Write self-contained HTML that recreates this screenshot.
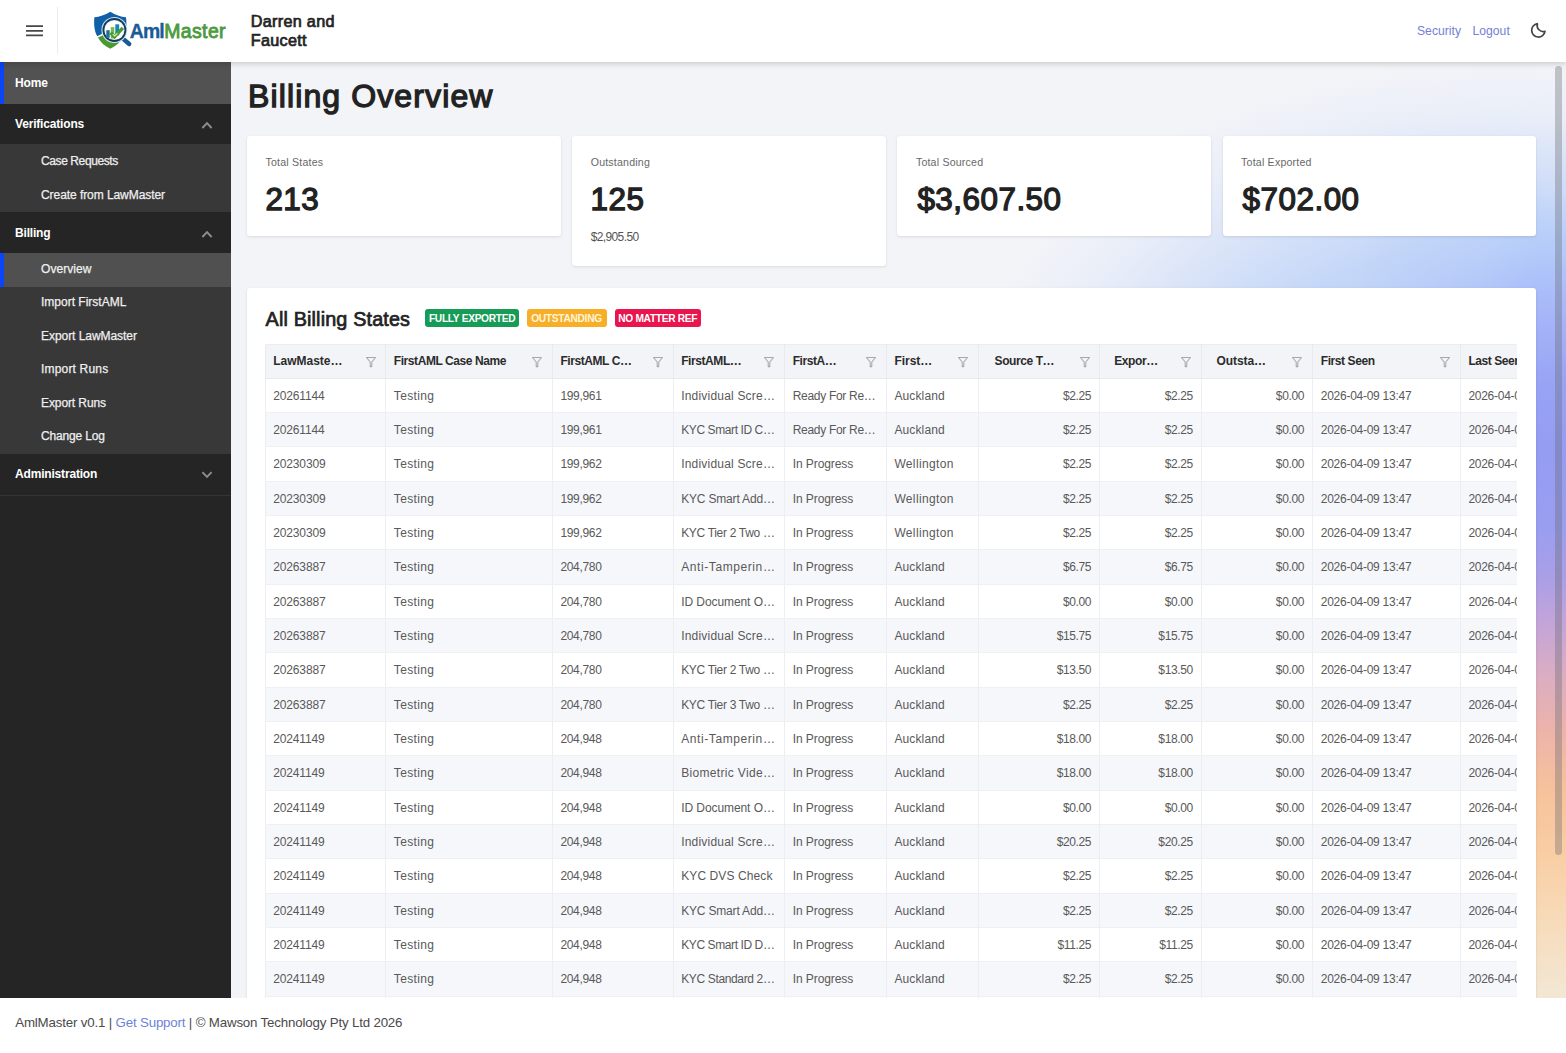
<!DOCTYPE html>
<html lang="en">
<head>
<meta charset="utf-8">
<title>Billing Overview - AmlMaster</title>
<style>
*{box-sizing:border-box;margin:0;padding:0}
html,body{width:1566px;height:1053px;overflow:hidden;background:#fff}
body{font-family:"Liberation Sans",sans-serif;font-size:12px;color:#444;position:relative}
a{text-decoration:none}
.abs{position:absolute}

/* ---------- top bar ---------- */
#topbar{position:absolute;left:0;top:0;width:1566px;height:62px;background:#fff;z-index:5;box-shadow:0 2px 6px rgba(0,0,0,.17)}
#burger{position:absolute;left:26px;top:24.9px;width:17px;height:12px}
#burger i{position:absolute;left:0;width:17px;height:2px;background:#3a3a3a;border-radius:.5px}
#vdiv{position:absolute;left:57.3px;top:7px;width:1px;height:47px;background:#ececec}
#logo{position:absolute;left:88px;top:6px;width:60px;height:50px}
#brand{position:absolute;left:129.8px;top:19.2px;font-size:19.4px;line-height:24px;font-weight:bold;letter-spacing:-.75px;white-space:nowrap}
#brand .a{color:#1b5b98;-webkit-text-stroke:.35px #1b5b98;letter-spacing:-.85px}
#brand .m{color:#4f9a41;font-weight:normal;-webkit-text-stroke:.85px #4f9a41;letter-spacing:.42px;margin-left:.3px}
#firm{position:absolute;left:250.8px;top:12.2px;font-size:16.2px;line-height:18.6px;font-weight:normal;-webkit-text-stroke:.72px #242424;color:#242424;letter-spacing:.3px;white-space:nowrap}
.toplink{position:absolute;top:23.6px;font-size:12.1px;line-height:15px;color:#7080d6;white-space:nowrap;letter-spacing:.05px}
#moon{position:absolute;left:1530px;top:22px;width:17px;height:17px}

/* ---------- sidebar ---------- */
#side{position:absolute;left:0;top:62px;width:231.4px;height:936px;background:#252525;color:#fff;overflow:hidden}
#side .row{position:absolute;left:0;width:232px;white-space:nowrap;padding-top:.6px}
#side .hd{font-weight:bold;font-size:12px;letter-spacing:-.18px;padding-left:15px;color:#fff}
#side .sub{background:#383838;font-size:12px;letter-spacing:-.2px;padding-left:41px;color:#efefef;-webkit-text-stroke:.25px #efefef}
#side .act{background:#505050}
#side .bar{position:absolute;left:0;top:0;width:4px;height:100%;background:#0b45f5}
#side svg.chev{position:absolute;left:201px;width:12px;height:9px}
#side .line{position:absolute;left:0;width:232px;height:1px;background:#343434}

/* ---------- main ---------- */
#main{position:absolute;left:232px;top:62px;width:1334px;height:936px;background:#f3f4f8;overflow:hidden}
#gap{position:absolute;left:230px;top:62px;width:3px;height:936px;background:#f3f4f8}
#grad{position:absolute;left:0;top:0;width:1334px;height:936px;background:radial-gradient(ellipse 540px 360px at 1270px 358px,rgba(181,205,248,1) 0%,rgba(181,205,248,.95) 30%,rgba(181,205,248,.75) 50%,rgba(181,205,248,.55) 62%,rgba(181,205,248,.35) 73%,rgba(181,205,248,.14) 86%,rgba(181,205,248,0) 100%)}
#grad2{position:absolute;left:0;top:0;width:1334px;height:936px;
background:linear-gradient(to bottom,rgba(165,196,251,0) 0,rgba(165,196,251,0) 60px,rgba(165,196,251,.14) 130px,rgba(166,194,251,.55) 190px,#a9baf9 238px,#99a4f5 318px,#949cf3 388px,#9a9ef0 468px,#ab9fe6 518px,#c2a4da 558px,#dcaec0 618px,#ecb3aa 668px,#f6c29c 728px,#f9cda3 788px,#f7dbb9 858px,#f3e6d3 928px);
-webkit-mask-image:linear-gradient(to right,transparent 1130px,rgba(0,0,0,.5) 1250px,#000 1304px);mask-image:linear-gradient(to right,transparent 1130px,rgba(0,0,0,.5) 1250px,#000 1304px)}
h1{position:absolute;left:16px;top:11.5px;font-size:32px;line-height:44px;font-weight:normal;-webkit-text-stroke:1.3px #222;color:#222;letter-spacing:1.12px;white-space:nowrap}
.card{position:absolute;top:74px;width:313.5px;height:100px;background:#fff;border-radius:3px;box-shadow:0 1px 3px rgba(0,0,0,.10),0 0 1px rgba(0,0,0,.06)}
.card .lb{position:absolute;left:18.5px;top:19.5px;font-size:10.6px;line-height:13px;color:#686868;letter-spacing:.2px;white-space:nowrap}
.card .vl{position:absolute;left:18.4px;top:43.7px;font-size:31.4px;line-height:40px;font-weight:normal;-webkit-text-stroke:1.3px #222;color:#222;letter-spacing:.5px;white-space:nowrap}
.card .sm{position:absolute;left:18.5px;top:95.3px;font-size:12px;line-height:13px;color:#555;letter-spacing:-.62px}
#panel{position:absolute;left:15px;top:226px;width:1289px;height:760px;background:#fff;border-radius:3px;box-shadow:0 1px 3px rgba(0,0,0,.10),0 0 1px rgba(0,0,0,.06)}
h2{position:absolute;left:18.6px;top:16.8px;font-size:19.8px;line-height:28px;font-weight:normal;-webkit-text-stroke:.7px #222;color:#222;letter-spacing:.15px;white-space:nowrap}
.badge{position:absolute;top:21px;height:18px;border-radius:3px;color:#fff;font-weight:bold;font-size:10.2px;line-height:19.8px;text-align:center;letter-spacing:-.3px;overflow:hidden;white-space:nowrap}
#tbl{position:absolute;left:17.6px;top:55.7px;width:1252.5px;height:660px;overflow:hidden}
.thead{position:relative;height:35px;background:#f3f4f8;border-top:1px solid #ecedf1;border-bottom:1px solid #e6e8ec}
.hc{position:absolute;top:0;height:33px;border-left:1px solid #e9eaef;font-weight:bold;color:#2c2c2c;font-size:12px;line-height:33.4px;padding-left:7.6px;letter-spacing:-.42px;white-space:nowrap;overflow:hidden}
.hc.num{padding-left:15.6px}
.fi{position:absolute;right:8.7px;top:11px;width:12px;height:12px}
.tr{position:relative;height:34.34px;border-bottom:1px solid #eff0f4;background:#fff}
.tr.alt{background:#f6f7fb}
.c{position:absolute;top:0;height:100%;border-left:1px solid #eceef2;font-size:12px;line-height:35.4px;padding:0 8.2px 0 7.6px;color:#595959;letter-spacing:-.32px;white-space:nowrap;overflow:hidden}
.c.num{text-align:right}
.c.tx{letter-spacing:0}
.c.t3{letter-spacing:.12px}

/* ---------- footer ---------- */
#foot{position:absolute;left:0;top:998px;width:1566px;height:55px;background:#fff}
#foot p{position:absolute;left:15.2px;top:15.5px;font-size:13.3px;line-height:18px;color:#4a4a4a;letter-spacing:-.17px;white-space:nowrap}
#foot a{color:#6c83d9}
/* scrollbar */
#sb{position:absolute;left:1323px;top:4px;width:7px;height:789px;border-radius:4px;background:rgba(105,105,115,.36)}
</style>
</head>
<body>

<div id="gap"></div>
<div id="main">
  <div id="grad"></div><div id="grad2"></div>
  <h1>Billing Overview</h1>

  <div class="card" style="left:15px"><div class="lb">Total States</div><div class="vl">213</div></div>
  <div class="card" style="left:340.2px;height:130px"><div class="lb">Outstanding</div><div class="vl">125</div><div class="sm">$2,905.50</div></div>
  <div class="card" style="left:665.4px"><div class="lb">Total Sourced</div><div class="vl" style="left:20px">$3,607.50</div></div>
  <div class="card" style="left:990.6px"><div class="lb">Total Exported</div><div class="vl" style="left:20px">$702.00</div></div>

  <div id="panel">
    <h2>All Billing States</h2>
    <div class="badge" style="left:178.3px;width:93.6px;background:#169c56">FULLY EXPORTED</div>
    <div class="badge" style="left:279.5px;width:80px;background:#f9ae27;color:#fff6dd">OUTSTANDING</div>
    <div class="badge" style="left:367.5px;width:86.5px;background:#e8154f">NO MATTER REF</div>
    <div id="tbl">
<div class="thead"><div class="hc" style="left:0.0px;width:120.6px;letter-spacing:0.0px"><span>LawMaste…</span><svg class="fi" viewBox="0 0 12 12"><path d="M1.5 1.5 H10.5 L6.8 6 V10.6 H5.2 V6 Z" fill="none" stroke="#a6a8ae" stroke-width="1.05" stroke-linejoin="round"/></svg></div><div class="hc" style="left:120.6px;width:166.6px"><span>FirstAML Case Name</span><svg class="fi" viewBox="0 0 12 12"><path d="M1.5 1.5 H10.5 L6.8 6 V10.6 H5.2 V6 Z" fill="none" stroke="#a6a8ae" stroke-width="1.05" stroke-linejoin="round"/></svg></div><div class="hc" style="left:287.2px;width:120.8px"><span>FirstAML C…</span><svg class="fi" viewBox="0 0 12 12"><path d="M1.5 1.5 H10.5 L6.8 6 V10.6 H5.2 V6 Z" fill="none" stroke="#a6a8ae" stroke-width="1.05" stroke-linejoin="round"/></svg></div><div class="hc" style="left:408.0px;width:111.5px"><span>FirstAML…</span><svg class="fi" viewBox="0 0 12 12"><path d="M1.5 1.5 H10.5 L6.8 6 V10.6 H5.2 V6 Z" fill="none" stroke="#a6a8ae" stroke-width="1.05" stroke-linejoin="round"/></svg></div><div class="hc" style="left:519.5px;width:101.7px"><span>FirstA…</span><svg class="fi" viewBox="0 0 12 12"><path d="M1.5 1.5 H10.5 L6.8 6 V10.6 H5.2 V6 Z" fill="none" stroke="#a6a8ae" stroke-width="1.05" stroke-linejoin="round"/></svg></div><div class="hc" style="left:621.2px;width:92.2px;letter-spacing:-0.02px"><span>First…</span><svg class="fi" viewBox="0 0 12 12"><path d="M1.5 1.5 H10.5 L6.8 6 V10.6 H5.2 V6 Z" fill="none" stroke="#a6a8ae" stroke-width="1.05" stroke-linejoin="round"/></svg></div><div class="hc num" style="left:713.4px;width:121.3px"><span>Source T…</span><svg class="fi" viewBox="0 0 12 12"><path d="M1.5 1.5 H10.5 L6.8 6 V10.6 H5.2 V6 Z" fill="none" stroke="#a6a8ae" stroke-width="1.05" stroke-linejoin="round"/></svg></div><div class="hc num" style="left:834.7px;width:101.7px;padding-left:14.0px"><span>Expor…</span><svg class="fi" viewBox="0 0 12 12"><path d="M1.5 1.5 H10.5 L6.8 6 V10.6 H5.2 V6 Z" fill="none" stroke="#a6a8ae" stroke-width="1.05" stroke-linejoin="round"/></svg></div><div class="hc num" style="left:936.4px;width:111.2px;letter-spacing:-0.1px;padding-left:14.6px"><span>Outsta…</span><svg class="fi" viewBox="0 0 12 12"><path d="M1.5 1.5 H10.5 L6.8 6 V10.6 H5.2 V6 Z" fill="none" stroke="#a6a8ae" stroke-width="1.05" stroke-linejoin="round"/></svg></div><div class="hc" style="left:1047.6px;width:147.6px"><span>First Seen</span><svg class="fi" viewBox="0 0 12 12"><path d="M1.5 1.5 H10.5 L6.8 6 V10.6 H5.2 V6 Z" fill="none" stroke="#a6a8ae" stroke-width="1.05" stroke-linejoin="round"/></svg></div><div class="hc" style="left:1195.2px;width:139.8px"><span>Last Seen</span></div></div>
<div class="tr"><div class="c" style="left:0.0px;width:120.6px;letter-spacing:-0.128px">20261144</div><div class="c tx" style="left:120.6px;width:166.6px;letter-spacing:0.363px">Testing</div><div class="c" style="left:287.2px;width:120.8px;letter-spacing:-0.312px">199,961</div><div class="c t3" style="left:408.0px;width:111.5px;letter-spacing:0.199px">Individual Scre…</div><div class="c tx" style="left:519.5px;width:101.7px;letter-spacing:-0.299px">Ready For Re…</div><div class="c tx" style="left:621.2px;width:92.2px;letter-spacing:0.134px">Auckland</div><div class="c num" style="left:713.4px;width:121.3px;letter-spacing:-0.380px">$2.25</div><div class="c num" style="left:834.7px;width:101.7px;letter-spacing:-0.380px">$2.25</div><div class="c num" style="left:936.4px;width:111.2px;letter-spacing:-0.380px">$0.00</div><div class="c" style="left:1047.6px;width:147.6px;letter-spacing:-0.263px">2026-04-09 13:47</div><div class="c" style="left:1195.2px;width:139.8px;letter-spacing:-0.263px">2026-04-09 13:47</div></div>
<div class="tr alt"><div class="c" style="left:0.0px;width:120.6px;letter-spacing:-0.128px">20261144</div><div class="c tx" style="left:120.6px;width:166.6px;letter-spacing:0.363px">Testing</div><div class="c" style="left:287.2px;width:120.8px;letter-spacing:-0.312px">199,961</div><div class="c t3" style="left:408.0px;width:111.5px;letter-spacing:-0.404px">KYC Smart ID C…</div><div class="c tx" style="left:519.5px;width:101.7px;letter-spacing:-0.299px">Ready For Re…</div><div class="c tx" style="left:621.2px;width:92.2px;letter-spacing:0.134px">Auckland</div><div class="c num" style="left:713.4px;width:121.3px;letter-spacing:-0.380px">$2.25</div><div class="c num" style="left:834.7px;width:101.7px;letter-spacing:-0.380px">$2.25</div><div class="c num" style="left:936.4px;width:111.2px;letter-spacing:-0.380px">$0.00</div><div class="c" style="left:1047.6px;width:147.6px;letter-spacing:-0.263px">2026-04-09 13:47</div><div class="c" style="left:1195.2px;width:139.8px;letter-spacing:-0.263px">2026-04-09 13:47</div></div>
<div class="tr"><div class="c" style="left:0.0px;width:120.6px;letter-spacing:-0.128px">20230309</div><div class="c tx" style="left:120.6px;width:166.6px;letter-spacing:0.363px">Testing</div><div class="c" style="left:287.2px;width:120.8px;letter-spacing:-0.312px">199,962</div><div class="c t3" style="left:408.0px;width:111.5px;letter-spacing:0.199px">Individual Scre…</div><div class="c tx" style="left:519.5px;width:101.7px;letter-spacing:-0.076px">In Progress</div><div class="c tx" style="left:621.2px;width:92.2px;letter-spacing:0.355px">Wellington</div><div class="c num" style="left:713.4px;width:121.3px;letter-spacing:-0.380px">$2.25</div><div class="c num" style="left:834.7px;width:101.7px;letter-spacing:-0.380px">$2.25</div><div class="c num" style="left:936.4px;width:111.2px;letter-spacing:-0.380px">$0.00</div><div class="c" style="left:1047.6px;width:147.6px;letter-spacing:-0.263px">2026-04-09 13:47</div><div class="c" style="left:1195.2px;width:139.8px;letter-spacing:-0.263px">2026-04-09 13:47</div></div>
<div class="tr alt"><div class="c" style="left:0.0px;width:120.6px;letter-spacing:-0.128px">20230309</div><div class="c tx" style="left:120.6px;width:166.6px;letter-spacing:0.363px">Testing</div><div class="c" style="left:287.2px;width:120.8px;letter-spacing:-0.312px">199,962</div><div class="c t3" style="left:408.0px;width:111.5px;letter-spacing:-0.180px">KYC Smart Add…</div><div class="c tx" style="left:519.5px;width:101.7px;letter-spacing:-0.076px">In Progress</div><div class="c tx" style="left:621.2px;width:92.2px;letter-spacing:0.355px">Wellington</div><div class="c num" style="left:713.4px;width:121.3px;letter-spacing:-0.380px">$2.25</div><div class="c num" style="left:834.7px;width:101.7px;letter-spacing:-0.380px">$2.25</div><div class="c num" style="left:936.4px;width:111.2px;letter-spacing:-0.380px">$0.00</div><div class="c" style="left:1047.6px;width:147.6px;letter-spacing:-0.263px">2026-04-09 13:47</div><div class="c" style="left:1195.2px;width:139.8px;letter-spacing:-0.263px">2026-04-09 13:47</div></div>
<div class="tr"><div class="c" style="left:0.0px;width:120.6px;letter-spacing:-0.128px">20230309</div><div class="c tx" style="left:120.6px;width:166.6px;letter-spacing:0.363px">Testing</div><div class="c" style="left:287.2px;width:120.8px;letter-spacing:-0.312px">199,962</div><div class="c t3" style="left:408.0px;width:111.5px;letter-spacing:-0.319px">KYC Tier 2 Two …</div><div class="c tx" style="left:519.5px;width:101.7px;letter-spacing:-0.076px">In Progress</div><div class="c tx" style="left:621.2px;width:92.2px;letter-spacing:0.355px">Wellington</div><div class="c num" style="left:713.4px;width:121.3px;letter-spacing:-0.380px">$2.25</div><div class="c num" style="left:834.7px;width:101.7px;letter-spacing:-0.380px">$2.25</div><div class="c num" style="left:936.4px;width:111.2px;letter-spacing:-0.380px">$0.00</div><div class="c" style="left:1047.6px;width:147.6px;letter-spacing:-0.263px">2026-04-09 13:47</div><div class="c" style="left:1195.2px;width:139.8px;letter-spacing:-0.263px">2026-04-09 13:47</div></div>
<div class="tr alt"><div class="c" style="left:0.0px;width:120.6px;letter-spacing:-0.128px">20263887</div><div class="c tx" style="left:120.6px;width:166.6px;letter-spacing:0.363px">Testing</div><div class="c" style="left:287.2px;width:120.8px;letter-spacing:-0.312px">204,780</div><div class="c t3" style="left:408.0px;width:111.5px;letter-spacing:0.590px">Anti-Tamperin…</div><div class="c tx" style="left:519.5px;width:101.7px;letter-spacing:-0.076px">In Progress</div><div class="c tx" style="left:621.2px;width:92.2px;letter-spacing:0.134px">Auckland</div><div class="c num" style="left:713.4px;width:121.3px;letter-spacing:-0.380px">$6.75</div><div class="c num" style="left:834.7px;width:101.7px;letter-spacing:-0.380px">$6.75</div><div class="c num" style="left:936.4px;width:111.2px;letter-spacing:-0.380px">$0.00</div><div class="c" style="left:1047.6px;width:147.6px;letter-spacing:-0.263px">2026-04-09 13:47</div><div class="c" style="left:1195.2px;width:139.8px;letter-spacing:-0.263px">2026-04-09 13:47</div></div>
<div class="tr"><div class="c" style="left:0.0px;width:120.6px;letter-spacing:-0.128px">20263887</div><div class="c tx" style="left:120.6px;width:166.6px;letter-spacing:0.363px">Testing</div><div class="c" style="left:287.2px;width:120.8px;letter-spacing:-0.312px">204,780</div><div class="c t3" style="left:408.0px;width:111.5px;letter-spacing:-0.076px">ID Document O…</div><div class="c tx" style="left:519.5px;width:101.7px;letter-spacing:-0.076px">In Progress</div><div class="c tx" style="left:621.2px;width:92.2px;letter-spacing:0.134px">Auckland</div><div class="c num" style="left:713.4px;width:121.3px;letter-spacing:-0.380px">$0.00</div><div class="c num" style="left:834.7px;width:101.7px;letter-spacing:-0.380px">$0.00</div><div class="c num" style="left:936.4px;width:111.2px;letter-spacing:-0.380px">$0.00</div><div class="c" style="left:1047.6px;width:147.6px;letter-spacing:-0.263px">2026-04-09 13:47</div><div class="c" style="left:1195.2px;width:139.8px;letter-spacing:-0.263px">2026-04-09 13:47</div></div>
<div class="tr alt"><div class="c" style="left:0.0px;width:120.6px;letter-spacing:-0.128px">20263887</div><div class="c tx" style="left:120.6px;width:166.6px;letter-spacing:0.363px">Testing</div><div class="c" style="left:287.2px;width:120.8px;letter-spacing:-0.312px">204,780</div><div class="c t3" style="left:408.0px;width:111.5px;letter-spacing:0.199px">Individual Scre…</div><div class="c tx" style="left:519.5px;width:101.7px;letter-spacing:-0.076px">In Progress</div><div class="c tx" style="left:621.2px;width:92.2px;letter-spacing:0.134px">Auckland</div><div class="c num" style="left:713.4px;width:121.3px;letter-spacing:-0.380px">$15.75</div><div class="c num" style="left:834.7px;width:101.7px;letter-spacing:-0.380px">$15.75</div><div class="c num" style="left:936.4px;width:111.2px;letter-spacing:-0.380px">$0.00</div><div class="c" style="left:1047.6px;width:147.6px;letter-spacing:-0.263px">2026-04-09 13:47</div><div class="c" style="left:1195.2px;width:139.8px;letter-spacing:-0.263px">2026-04-09 13:47</div></div>
<div class="tr"><div class="c" style="left:0.0px;width:120.6px;letter-spacing:-0.128px">20263887</div><div class="c tx" style="left:120.6px;width:166.6px;letter-spacing:0.363px">Testing</div><div class="c" style="left:287.2px;width:120.8px;letter-spacing:-0.312px">204,780</div><div class="c t3" style="left:408.0px;width:111.5px;letter-spacing:-0.319px">KYC Tier 2 Two …</div><div class="c tx" style="left:519.5px;width:101.7px;letter-spacing:-0.076px">In Progress</div><div class="c tx" style="left:621.2px;width:92.2px;letter-spacing:0.134px">Auckland</div><div class="c num" style="left:713.4px;width:121.3px;letter-spacing:-0.380px">$13.50</div><div class="c num" style="left:834.7px;width:101.7px;letter-spacing:-0.380px">$13.50</div><div class="c num" style="left:936.4px;width:111.2px;letter-spacing:-0.380px">$0.00</div><div class="c" style="left:1047.6px;width:147.6px;letter-spacing:-0.263px">2026-04-09 13:47</div><div class="c" style="left:1195.2px;width:139.8px;letter-spacing:-0.263px">2026-04-09 13:47</div></div>
<div class="tr alt"><div class="c" style="left:0.0px;width:120.6px;letter-spacing:-0.128px">20263887</div><div class="c tx" style="left:120.6px;width:166.6px;letter-spacing:0.363px">Testing</div><div class="c" style="left:287.2px;width:120.8px;letter-spacing:-0.312px">204,780</div><div class="c t3" style="left:408.0px;width:111.5px;letter-spacing:-0.319px">KYC Tier 3 Two …</div><div class="c tx" style="left:519.5px;width:101.7px;letter-spacing:-0.076px">In Progress</div><div class="c tx" style="left:621.2px;width:92.2px;letter-spacing:0.134px">Auckland</div><div class="c num" style="left:713.4px;width:121.3px;letter-spacing:-0.380px">$2.25</div><div class="c num" style="left:834.7px;width:101.7px;letter-spacing:-0.380px">$2.25</div><div class="c num" style="left:936.4px;width:111.2px;letter-spacing:-0.380px">$0.00</div><div class="c" style="left:1047.6px;width:147.6px;letter-spacing:-0.263px">2026-04-09 13:47</div><div class="c" style="left:1195.2px;width:139.8px;letter-spacing:-0.263px">2026-04-09 13:47</div></div>
<div class="tr"><div class="c" style="left:0.0px;width:120.6px;letter-spacing:-0.128px">20241149</div><div class="c tx" style="left:120.6px;width:166.6px;letter-spacing:0.363px">Testing</div><div class="c" style="left:287.2px;width:120.8px;letter-spacing:-0.312px">204,948</div><div class="c t3" style="left:408.0px;width:111.5px;letter-spacing:0.590px">Anti-Tamperin…</div><div class="c tx" style="left:519.5px;width:101.7px;letter-spacing:-0.076px">In Progress</div><div class="c tx" style="left:621.2px;width:92.2px;letter-spacing:0.134px">Auckland</div><div class="c num" style="left:713.4px;width:121.3px;letter-spacing:-0.380px">$18.00</div><div class="c num" style="left:834.7px;width:101.7px;letter-spacing:-0.380px">$18.00</div><div class="c num" style="left:936.4px;width:111.2px;letter-spacing:-0.380px">$0.00</div><div class="c" style="left:1047.6px;width:147.6px;letter-spacing:-0.263px">2026-04-09 13:47</div><div class="c" style="left:1195.2px;width:139.8px;letter-spacing:-0.263px">2026-04-09 13:47</div></div>
<div class="tr alt"><div class="c" style="left:0.0px;width:120.6px;letter-spacing:-0.128px">20241149</div><div class="c tx" style="left:120.6px;width:166.6px;letter-spacing:0.363px">Testing</div><div class="c" style="left:287.2px;width:120.8px;letter-spacing:-0.312px">204,948</div><div class="c t3" style="left:408.0px;width:111.5px;letter-spacing:0.325px">Biometric Vide…</div><div class="c tx" style="left:519.5px;width:101.7px;letter-spacing:-0.076px">In Progress</div><div class="c tx" style="left:621.2px;width:92.2px;letter-spacing:0.134px">Auckland</div><div class="c num" style="left:713.4px;width:121.3px;letter-spacing:-0.380px">$18.00</div><div class="c num" style="left:834.7px;width:101.7px;letter-spacing:-0.380px">$18.00</div><div class="c num" style="left:936.4px;width:111.2px;letter-spacing:-0.380px">$0.00</div><div class="c" style="left:1047.6px;width:147.6px;letter-spacing:-0.263px">2026-04-09 13:47</div><div class="c" style="left:1195.2px;width:139.8px;letter-spacing:-0.263px">2026-04-09 13:47</div></div>
<div class="tr"><div class="c" style="left:0.0px;width:120.6px;letter-spacing:-0.128px">20241149</div><div class="c tx" style="left:120.6px;width:166.6px;letter-spacing:0.363px">Testing</div><div class="c" style="left:287.2px;width:120.8px;letter-spacing:-0.312px">204,948</div><div class="c t3" style="left:408.0px;width:111.5px;letter-spacing:-0.076px">ID Document O…</div><div class="c tx" style="left:519.5px;width:101.7px;letter-spacing:-0.076px">In Progress</div><div class="c tx" style="left:621.2px;width:92.2px;letter-spacing:0.134px">Auckland</div><div class="c num" style="left:713.4px;width:121.3px;letter-spacing:-0.380px">$0.00</div><div class="c num" style="left:834.7px;width:101.7px;letter-spacing:-0.380px">$0.00</div><div class="c num" style="left:936.4px;width:111.2px;letter-spacing:-0.380px">$0.00</div><div class="c" style="left:1047.6px;width:147.6px;letter-spacing:-0.263px">2026-04-09 13:47</div><div class="c" style="left:1195.2px;width:139.8px;letter-spacing:-0.263px">2026-04-09 13:47</div></div>
<div class="tr alt"><div class="c" style="left:0.0px;width:120.6px;letter-spacing:-0.128px">20241149</div><div class="c tx" style="left:120.6px;width:166.6px;letter-spacing:0.363px">Testing</div><div class="c" style="left:287.2px;width:120.8px;letter-spacing:-0.312px">204,948</div><div class="c t3" style="left:408.0px;width:111.5px;letter-spacing:0.199px">Individual Scre…</div><div class="c tx" style="left:519.5px;width:101.7px;letter-spacing:-0.076px">In Progress</div><div class="c tx" style="left:621.2px;width:92.2px;letter-spacing:0.134px">Auckland</div><div class="c num" style="left:713.4px;width:121.3px;letter-spacing:-0.380px">$20.25</div><div class="c num" style="left:834.7px;width:101.7px;letter-spacing:-0.380px">$20.25</div><div class="c num" style="left:936.4px;width:111.2px;letter-spacing:-0.380px">$0.00</div><div class="c" style="left:1047.6px;width:147.6px;letter-spacing:-0.263px">2026-04-09 13:47</div><div class="c" style="left:1195.2px;width:139.8px;letter-spacing:-0.263px">2026-04-09 13:47</div></div>
<div class="tr"><div class="c" style="left:0.0px;width:120.6px;letter-spacing:-0.128px">20241149</div><div class="c tx" style="left:120.6px;width:166.6px;letter-spacing:0.363px">Testing</div><div class="c" style="left:287.2px;width:120.8px;letter-spacing:-0.312px">204,948</div><div class="c t3" style="left:408.0px;width:111.5px;letter-spacing:0.100px">KYC DVS Check</div><div class="c tx" style="left:519.5px;width:101.7px;letter-spacing:-0.076px">In Progress</div><div class="c tx" style="left:621.2px;width:92.2px;letter-spacing:0.134px">Auckland</div><div class="c num" style="left:713.4px;width:121.3px;letter-spacing:-0.380px">$2.25</div><div class="c num" style="left:834.7px;width:101.7px;letter-spacing:-0.380px">$2.25</div><div class="c num" style="left:936.4px;width:111.2px;letter-spacing:-0.380px">$0.00</div><div class="c" style="left:1047.6px;width:147.6px;letter-spacing:-0.263px">2026-04-09 13:47</div><div class="c" style="left:1195.2px;width:139.8px;letter-spacing:-0.263px">2026-04-09 13:47</div></div>
<div class="tr alt"><div class="c" style="left:0.0px;width:120.6px;letter-spacing:-0.128px">20241149</div><div class="c tx" style="left:120.6px;width:166.6px;letter-spacing:0.363px">Testing</div><div class="c" style="left:287.2px;width:120.8px;letter-spacing:-0.312px">204,948</div><div class="c t3" style="left:408.0px;width:111.5px;letter-spacing:-0.180px">KYC Smart Add…</div><div class="c tx" style="left:519.5px;width:101.7px;letter-spacing:-0.076px">In Progress</div><div class="c tx" style="left:621.2px;width:92.2px;letter-spacing:0.134px">Auckland</div><div class="c num" style="left:713.4px;width:121.3px;letter-spacing:-0.380px">$2.25</div><div class="c num" style="left:834.7px;width:101.7px;letter-spacing:-0.380px">$2.25</div><div class="c num" style="left:936.4px;width:111.2px;letter-spacing:-0.380px">$0.00</div><div class="c" style="left:1047.6px;width:147.6px;letter-spacing:-0.263px">2026-04-09 13:47</div><div class="c" style="left:1195.2px;width:139.8px;letter-spacing:-0.263px">2026-04-09 13:47</div></div>
<div class="tr"><div class="c" style="left:0.0px;width:120.6px;letter-spacing:-0.128px">20241149</div><div class="c tx" style="left:120.6px;width:166.6px;letter-spacing:0.363px">Testing</div><div class="c" style="left:287.2px;width:120.8px;letter-spacing:-0.312px">204,948</div><div class="c t3" style="left:408.0px;width:111.5px;letter-spacing:-0.404px">KYC Smart ID D…</div><div class="c tx" style="left:519.5px;width:101.7px;letter-spacing:-0.076px">In Progress</div><div class="c tx" style="left:621.2px;width:92.2px;letter-spacing:0.134px">Auckland</div><div class="c num" style="left:713.4px;width:121.3px;letter-spacing:-0.380px">$11.25</div><div class="c num" style="left:834.7px;width:101.7px;letter-spacing:-0.380px">$11.25</div><div class="c num" style="left:936.4px;width:111.2px;letter-spacing:-0.380px">$0.00</div><div class="c" style="left:1047.6px;width:147.6px;letter-spacing:-0.263px">2026-04-09 13:47</div><div class="c" style="left:1195.2px;width:139.8px;letter-spacing:-0.263px">2026-04-09 13:47</div></div>
<div class="tr alt"><div class="c" style="left:0.0px;width:120.6px;letter-spacing:-0.128px">20241149</div><div class="c tx" style="left:120.6px;width:166.6px;letter-spacing:0.363px">Testing</div><div class="c" style="left:287.2px;width:120.8px;letter-spacing:-0.312px">204,948</div><div class="c t3" style="left:408.0px;width:111.5px;letter-spacing:-0.359px">KYC Standard 2…</div><div class="c tx" style="left:519.5px;width:101.7px;letter-spacing:-0.076px">In Progress</div><div class="c tx" style="left:621.2px;width:92.2px;letter-spacing:0.134px">Auckland</div><div class="c num" style="left:713.4px;width:121.3px;letter-spacing:-0.380px">$2.25</div><div class="c num" style="left:834.7px;width:101.7px;letter-spacing:-0.380px">$2.25</div><div class="c num" style="left:936.4px;width:111.2px;letter-spacing:-0.380px">$0.00</div><div class="c" style="left:1047.6px;width:147.6px;letter-spacing:-0.263px">2026-04-09 13:47</div><div class="c" style="left:1195.2px;width:139.8px;letter-spacing:-0.263px">2026-04-09 13:47</div></div>
<div class="tr"><div class="c" style="left:0.0px;width:120.6px;letter-spacing:-0.128px">20241149</div><div class="c tx" style="left:120.6px;width:166.6px;letter-spacing:0.363px">Testing</div><div class="c" style="left:287.2px;width:120.8px;letter-spacing:-0.312px">204,948</div><div class="c t3" style="left:408.0px;width:111.5px;letter-spacing:-0.319px">KYC Tier 2 Two …</div><div class="c tx" style="left:519.5px;width:101.7px;letter-spacing:-0.076px">In Progress</div><div class="c tx" style="left:621.2px;width:92.2px;letter-spacing:0.134px">Auckland</div><div class="c num" style="left:713.4px;width:121.3px;letter-spacing:-0.380px">$2.25</div><div class="c num" style="left:834.7px;width:101.7px;letter-spacing:-0.380px">$2.25</div><div class="c num" style="left:936.4px;width:111.2px;letter-spacing:-0.380px">$0.00</div><div class="c" style="left:1047.6px;width:147.6px;letter-spacing:-0.263px">2026-04-09 13:47</div><div class="c" style="left:1195.2px;width:139.8px;letter-spacing:-0.263px">2026-04-09 13:47</div></div>
    </div>
  </div>
  <div id="sb"></div>
</div>

<div id="side">
  <div class="row hd act" style="top:0;height:41.5px;line-height:40px;background:#525252"><span class="bar"></span>Home</div>
  <div class="row hd" style="top:41.5px;height:40.9px;line-height:41px">Verifications<svg class="chev" style="top:17.4px" viewBox="0 0 12 9"><path d="M1.4 7 L6 2.2 L10.6 7" fill="none" stroke="#8e8e8e" stroke-width="1.9"/></svg></div>
  <div class="row sub" style="top:82.4px;height:33.9px;line-height:32.4px;letter-spacing:-0.400px">Case Requests</div>
  <div class="row sub" style="top:116.3px;height:33.9px;line-height:32.4px;letter-spacing:-0.065px">Create from LawMaster</div>
  <div class="row hd" style="top:150.2px;height:40.4px;line-height:40.4px">Billing<svg class="chev" style="top:17.4px" viewBox="0 0 12 9"><path d="M1.4 7 L6 2.2 L10.6 7" fill="none" stroke="#8e8e8e" stroke-width="1.9"/></svg></div>
  <div class="row sub act" style="top:190.6px;height:34.2px;line-height:32.4px;letter-spacing:0.070px"><span class="bar"></span>Overview</div>
  <div class="row sub" style="top:224.8px;height:33.4px;line-height:31.6px;letter-spacing:0.000px">Import FirstAML</div>
  <div class="row sub" style="top:258.2px;height:33.4px;line-height:31.6px;letter-spacing:-0.053px">Export LawMaster</div>
  <div class="row sub" style="top:291.6px;height:33.4px;line-height:31.6px;letter-spacing:0.180px">Import Runs</div>
  <div class="row sub" style="top:325px;height:33.4px;line-height:31.6px;letter-spacing:-0.100px">Export Runs</div>
  <div class="row sub" style="top:358.4px;height:33.4px;line-height:31.6px;letter-spacing:-0.160px">Change Log</div>
  <div class="row hd" style="top:391.8px;height:41px;line-height:41px">Administration<svg class="chev" style="top:16.5px" viewBox="0 0 12 9"><path d="M1.4 2.2 L6 7 L10.6 2.2" fill="none" stroke="#8e8e8e" stroke-width="1.9"/></svg></div>
  <div class="line" style="top:432.6px"></div>
</div>

<div id="topbar">
  <svg id="burger" viewBox="0 0 17 12"><path d="M0 1.05H17M0 5.75H17M0 10.3H17" stroke="#474747" stroke-width="1.75" fill="none"/></svg>
  <div id="vdiv"></div>
  <svg id="logo" viewBox="0 0 60 50">
    <!-- shield -->
    <path d="M22.3 5.8 C17 9.3 11.5 10.8 6.4 11.2 C5.6 19 6.6 25.6 9.3 30.2 L31 19 L38.2 23 C38.6 19 38.5 15 38 11.2 C32.6 10.8 27.6 9.3 22.3 5.8 Z" fill="#0f5fa9"/>
    <path d="M9.9 31.4 C12.4 36 16.6 40 22.3 42.8 C28 40 32.2 36 34.6 31.4 L31 22 Z" fill="#4c9a2f"/>
    <!-- magnifier -->
    <line x1="34" y1="31.8" x2="41.2" y2="38" stroke="#175c92" stroke-width="4.4" stroke-linecap="round"/>
    <circle cx="26.4" cy="24" r="13" fill="#cde5f3"/>
    <circle cx="26.4" cy="24" r="11.9" fill="#173a5c"/>
    <circle cx="26.4" cy="24" r="10.1" fill="#dcedf7"/>
    <circle cx="26.4" cy="24" r="9.3" fill="#ffffff"/>
    <!-- bars -->
    <rect x="18.3" y="24.2" width="3.4" height="7.6" fill="#1c6f95"/>
    <rect x="22.8" y="21.1" width="3.5" height="11.4" fill="#7db84a"/>
    <rect x="27.3" y="18.3" width="3.9" height="11" fill="#1a86b6"/>
    <!-- check -->
    <path d="M22.6 26.8 L26.6 30.8 L34.8 21.8" fill="none" stroke="#4a9a2c" stroke-width="3.4"/>
    <path d="M24.8 28.2 L26.7 29.9 L29.4 27.3" fill="none" stroke="#d9f5c2" stroke-width="1.1"/>
  </svg>
  <div id="brand"><span class="a">Aml</span><span class="m">Master</span></div>
  <div id="firm">Darren and<br>Faucett</div>
  <a class="toplink" style="left:1417px">Security</a>
  <a class="toplink" style="left:1472.5px">Logout</a>
  <svg id="moon" viewBox="0 0 17 17"><path d="M7.4 1.7 A6.7 6.7 0 1 0 15 9.4 A6.2 6.2 0 0 1 7.4 1.7 Z" fill="none" stroke="#444" stroke-width="1.7" stroke-linejoin="round"/></svg>
</div>

<div id="foot"><p>AmlMaster v0.1 | <a>Get Support</a> | © Mawson Technology Pty Ltd 2026</p></div>

</body>
</html>
